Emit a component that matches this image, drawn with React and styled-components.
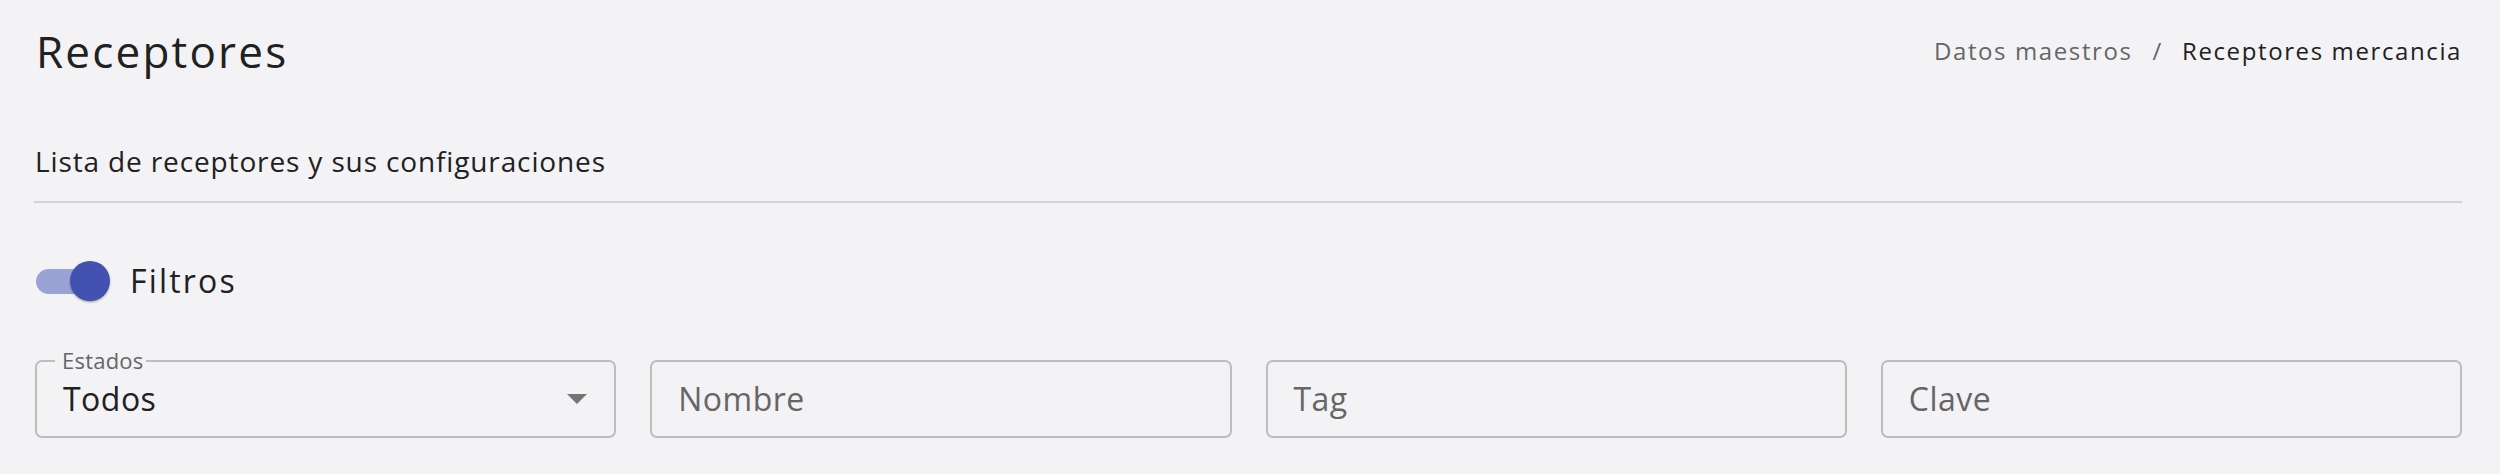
import React from "react";
import styled, { createGlobalStyle } from "styled-components";

const Global = createGlobalStyle`
  html, body { margin: 0; padding: 0; background: #f3f3f5; }
  body { font-family: "Open Sans", "Noto Sans", sans-serif; color: #212121; letter-spacing: 0.03em; }
  * { box-sizing: border-box; }
`;

const Page = styled.div`
  padding: 29px 38px 0 34px;
  display: flex;
  flex-direction: column;
`;

const Header = styled.header`
  display: flex;
  align-items: center;
  justify-content: space-between;
`;

const Title = styled.h1`
  margin: 0 0 0 2px;
  font-size: 44px;
  line-height: 44px;
  font-weight: 500;
  letter-spacing: 0.05em;
  color: #212121;
`;

const Crumbs = styled.nav`
  display: flex;
  align-items: center;
  font-size: 24px;
  line-height: 24px;
  letter-spacing: 0.067em;
`;

const Crumb = styled.span`
  color: ${(p) => (p.$current ? "#212121" : "#666666")};
`;

const Sep = styled.span`
  color: #666666;
  margin: 0 19px 0 20px;
`;

const Subtitle = styled.p`
  margin: 74px 0 0 1px;
  font-size: 28px;
  line-height: 28px;
  letter-spacing: 0.031em;
  color: #212121;
`;

const Divider = styled.hr`
  margin: 26px 0 0;
  border: none;
  height: 2px;
  background: #d4d4d8;
`;

const SwitchRow = styled.label`
  margin-top: 58px;
  display: flex;
  align-items: center;
  gap: 20px;
  padding-left: 2px;
`;

const SwitchTrack = styled.span`
  position: relative;
  display: inline-block;
  width: 74px;
  height: 40px;
  &::before {
    content: "";
    position: absolute;
    left: 0;
    top: 8px;
    width: 70px;
    height: 25px;
    border-radius: 13px;
    background: #9ba2d5;
  }
`;

const SwitchThumb = styled.span`
  position: absolute;
  right: 0;
  top: 0;
  width: 40px;
  height: 40px;
  border-radius: 50%;
  background: #4351b0;
  box-shadow: 0 2px 2px -1px rgba(0,0,0,0.25), 0 1px 3px rgba(0,0,0,0.18);
`;

const SwitchLabel = styled.span`
  font-size: 32px;
  line-height: 40px;
  letter-spacing: 0.068em;
  color: #212121;
`;

const Filters = styled.div`
  margin-top: 59px;
  margin-left: 1px;
  display: grid;
  grid-template-columns: repeat(4, 1fr);
  gap: 34px;
`;

const Field = styled.div`
  position: relative;
  height: 78px;
  border: 2px solid #bdbdbd;
  border-radius: 7px;
  display: flex;
  align-items: center;
  padding: 0 26px;
`;

const FloatLabel = styled.span`
  position: absolute;
  left: 18px;
  top: -13px;
  padding: 0 2px 0 7px;
  background: #f3f3f5;
  font-size: 22px;
  line-height: 22px;
  letter-spacing: 0.01em;
  color: #666666;
`;

const Value = styled.span`
  flex: 1;
  font-size: 32px;
  line-height: 40px;
  color: ${(p) => (p.$placeholder ? "#666666" : "#212121")};
`;

const Caret = styled.span`
  width: 0;
  height: 0;
  border-left: 10px solid transparent;
  border-right: 10px solid transparent;
  border-top: 10px solid #757575;
  margin-right: 1px;
`;

export default function App() {
  return (
    <>
      <Global />
      <Page>
        <Header>
          <Title>Receptores</Title>
          <Crumbs>
            <Crumb>Datos maestros</Crumb>
            <Sep>/</Sep>
            <Crumb $current>Receptores mercancia</Crumb>
          </Crumbs>
        </Header>
        <Subtitle>Lista de receptores y sus configuraciones</Subtitle>
        <Divider />
        <SwitchRow>
          <SwitchTrack>
            <SwitchThumb />
          </SwitchTrack>
          <SwitchLabel>Filtros</SwitchLabel>
        </SwitchRow>
        <Filters>
          <Field>
            <FloatLabel>Estados</FloatLabel>
            <Value>Todos</Value>
            <Caret />
          </Field>
          <Field>
            <Value $placeholder>Nombre</Value>
          </Field>
          <Field>
            <Value $placeholder>Tag</Value>
          </Field>
          <Field>
            <Value $placeholder>Clave</Value>
          </Field>
        </Filters>
      </Page>
    </>
  );
}
